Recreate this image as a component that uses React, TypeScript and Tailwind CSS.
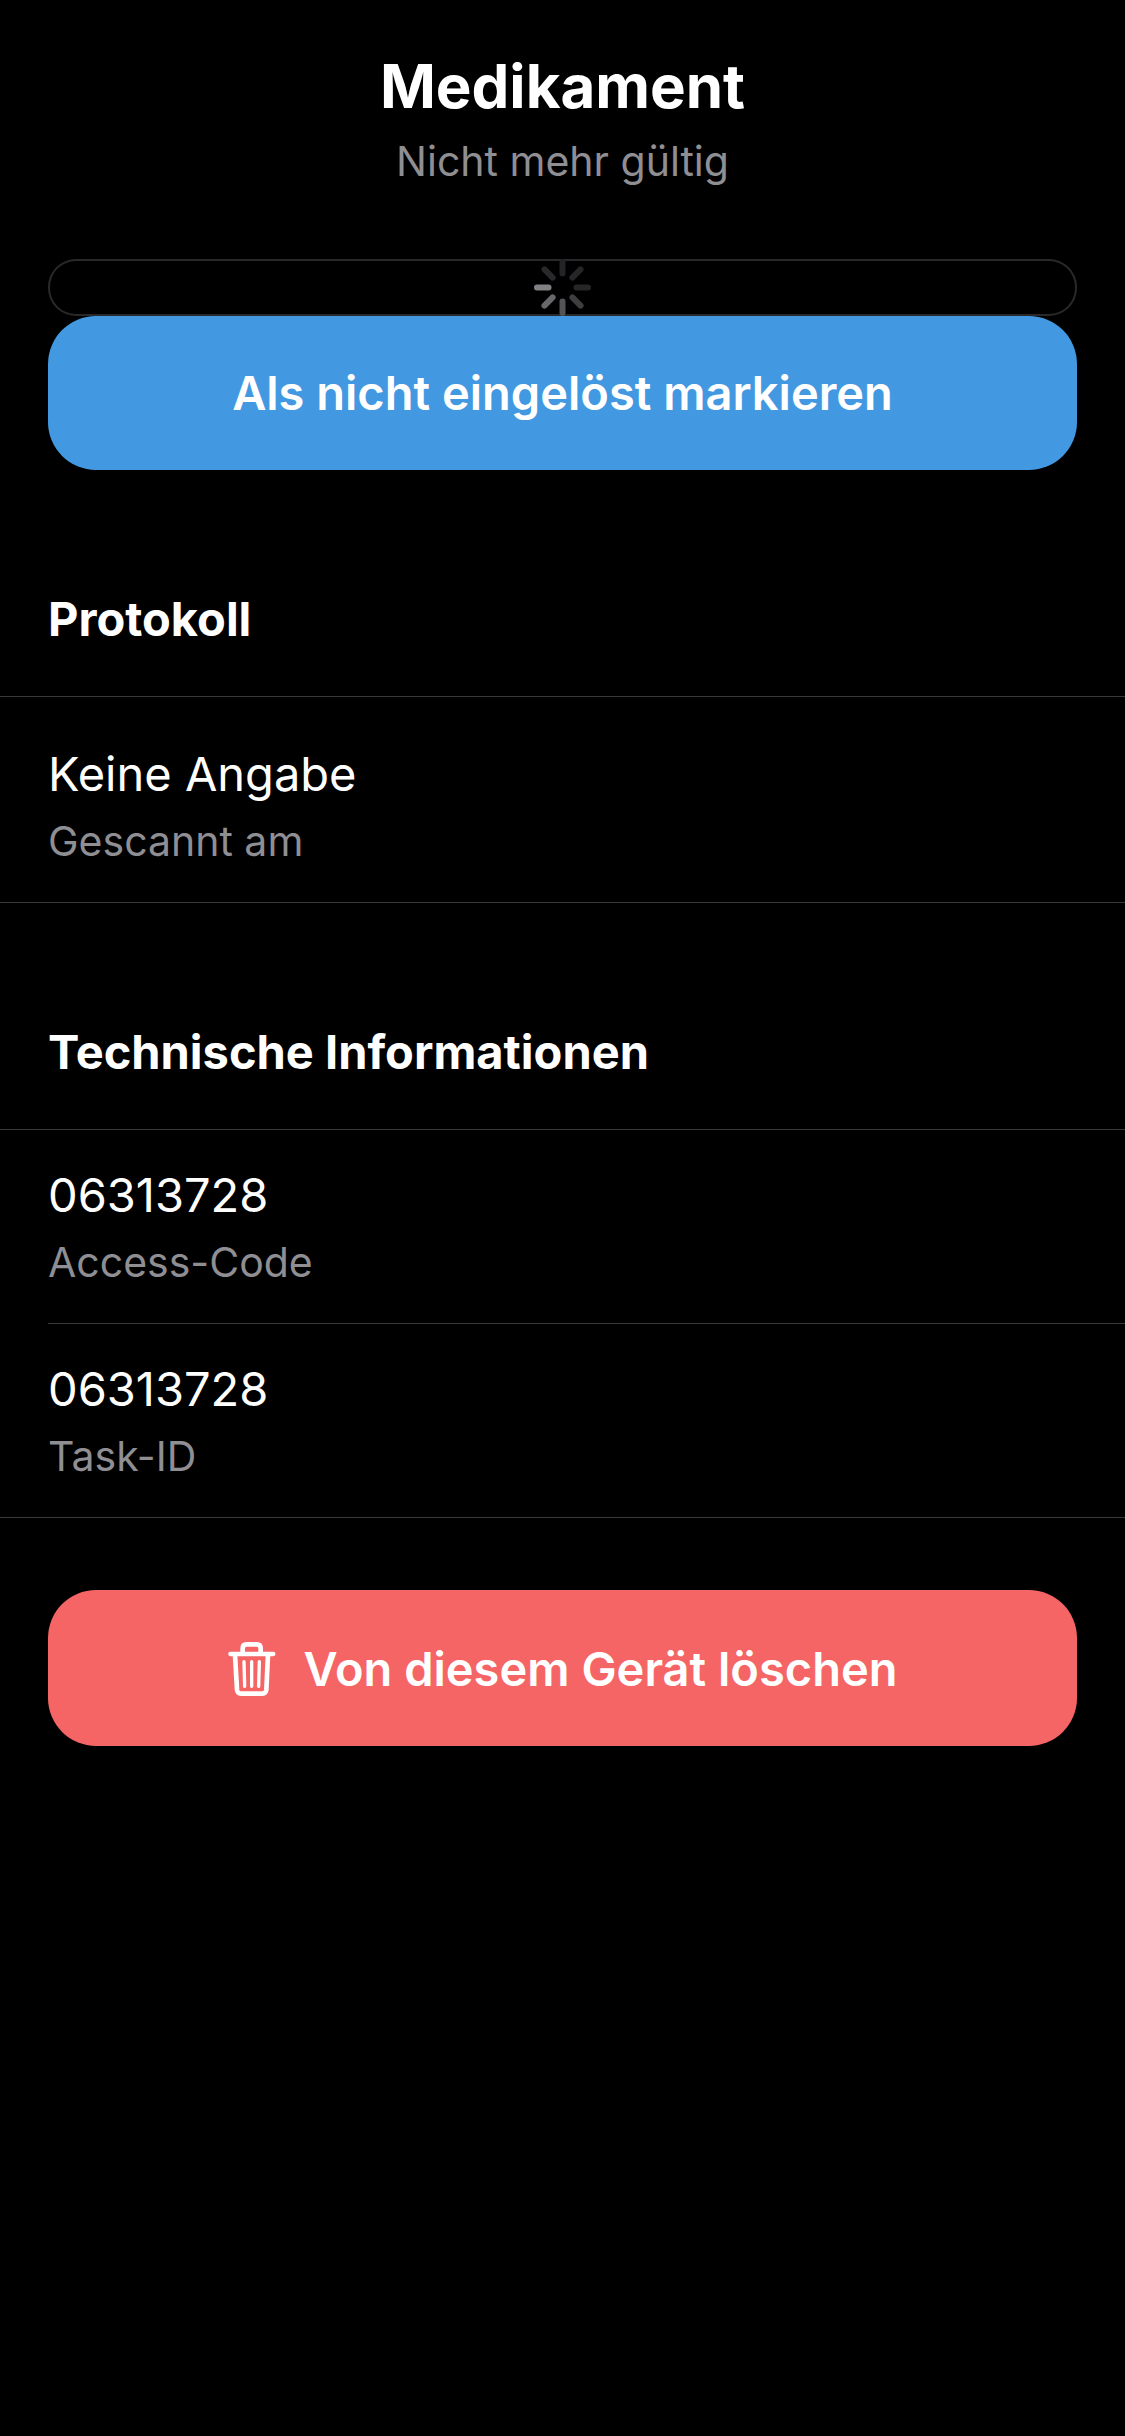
import React from "react";

const spokes = [
  { angle: 0, color: "#242426" },
  { angle: 45, color: "#262628" },
  { angle: 90, color: "#262628" },
  { angle: 135, color: "#3e3e40" },
  { angle: 180, color: "#545457" },
  { angle: 225, color: "#68686b" },
  { angle: 270, color: "#808085" },
  { angle: 315, color: "#29292b" },
];

function Spinner() {
  return (
    <svg viewBox="0 0 57 57" className="size-[57px]" role="img" aria-label="Wird geladen">
      {spokes.map((spoke) => (
        <line
          key={spoke.angle}
          x1="28.5"
          y1="3"
          x2="28.5"
          y2="14.5"
          stroke={spoke.color}
          strokeWidth="6"
          strokeLinecap="round"
          transform={`rotate(${spoke.angle} 28.5 28.5)`}
        />
      ))}
    </svg>
  );
}

function TrashIcon() {
  return (
    <svg viewBox="0 0 144 162" className="h-[54px] w-12" fill="none" stroke="currentColor" strokeLinecap="round" strokeLinejoin="round" aria-hidden="true">
      <path strokeWidth="13" d="M7 36H136" />
      <path strokeWidth="14" d="M44 34V19Q44 7 56 7H86Q98 7 98 19V34" />
      <path strokeWidth="14" d="M21 38L27 143Q28 155 39 155H103Q114 155 115 143L120 38" />
      <path strokeWidth="10" d="M48 59L50 133M71 59V133M94 59L92 133" />
    </svg>
  );
}

function SectionTitle({ children }: { children: React.ReactNode }) {
  return <h2 className="px-12 pt-[119px] pb-[47px] text-[47px] leading-[60px] font-bold">{children}</h2>;
}

function Entry({ value, label }: { value: string; label: string }) {
  return (
    <div className="flex flex-col gap-[10px]">
      <dt className="order-last text-[41px] leading-[54px] text-[#8e8e93]">{label}</dt>
      <dd className="text-[47px] leading-[60px]">{value}</dd>
    </div>
  );
}

export default function App() {
  return (
    <main className="min-h-screen bg-black font-['Inter',sans-serif] text-white">
      <header className="flex flex-col items-center gap-[10px] px-12 pt-12 text-center">
        <h1 className="text-[60px] leading-[76px] font-bold">Medikament</h1>
        <p className="text-[41px] leading-[54px] text-[#8e8e93]">Nicht mehr gültig</p>
      </header>

      <div className="mt-[71px] px-12">
        <div className="flex justify-center rounded-[28px] inset-ring-2 inset-ring-[#29292b]">
          <Spinner />
        </div>
        <button type="button" className="block w-full rounded-[48px] bg-[#4299e1] py-[47px] text-[47px] leading-[60px] font-semibold">
          Als nicht eingelöst markieren
        </button>
      </div>

      <section>
        <SectionTitle>Protokoll</SectionTitle>
        <dl className="border-y border-[#38383a] px-12 pt-[47px] pb-[34px]">
          <Entry value="Keine Angabe" label="Gescannt am" />
        </dl>
      </section>

      <section>
        <SectionTitle>Technische Informationen</SectionTitle>
        <dl className="border-y border-[#38383a] pl-12">
          <div className="border-b border-[#38383a] pt-[35px] pb-[34px]">
            <Entry value="06313728" label="Access-Code" />
          </div>
          <div className="pt-[35px] pb-[34px]">
            <Entry value="06313728" label="Task-ID" />
          </div>
        </dl>
      </section>

      <div className="px-12 pt-[72px]">
        <button type="button" className="flex w-full items-center justify-center gap-7 rounded-[48px] bg-[#f56565] pt-[49px] pb-[47px] text-[47px] leading-[60px] font-semibold">
          <TrashIcon />
          Von diesem Gerät löschen
        </button>
      </div>
    </main>
  );
}
